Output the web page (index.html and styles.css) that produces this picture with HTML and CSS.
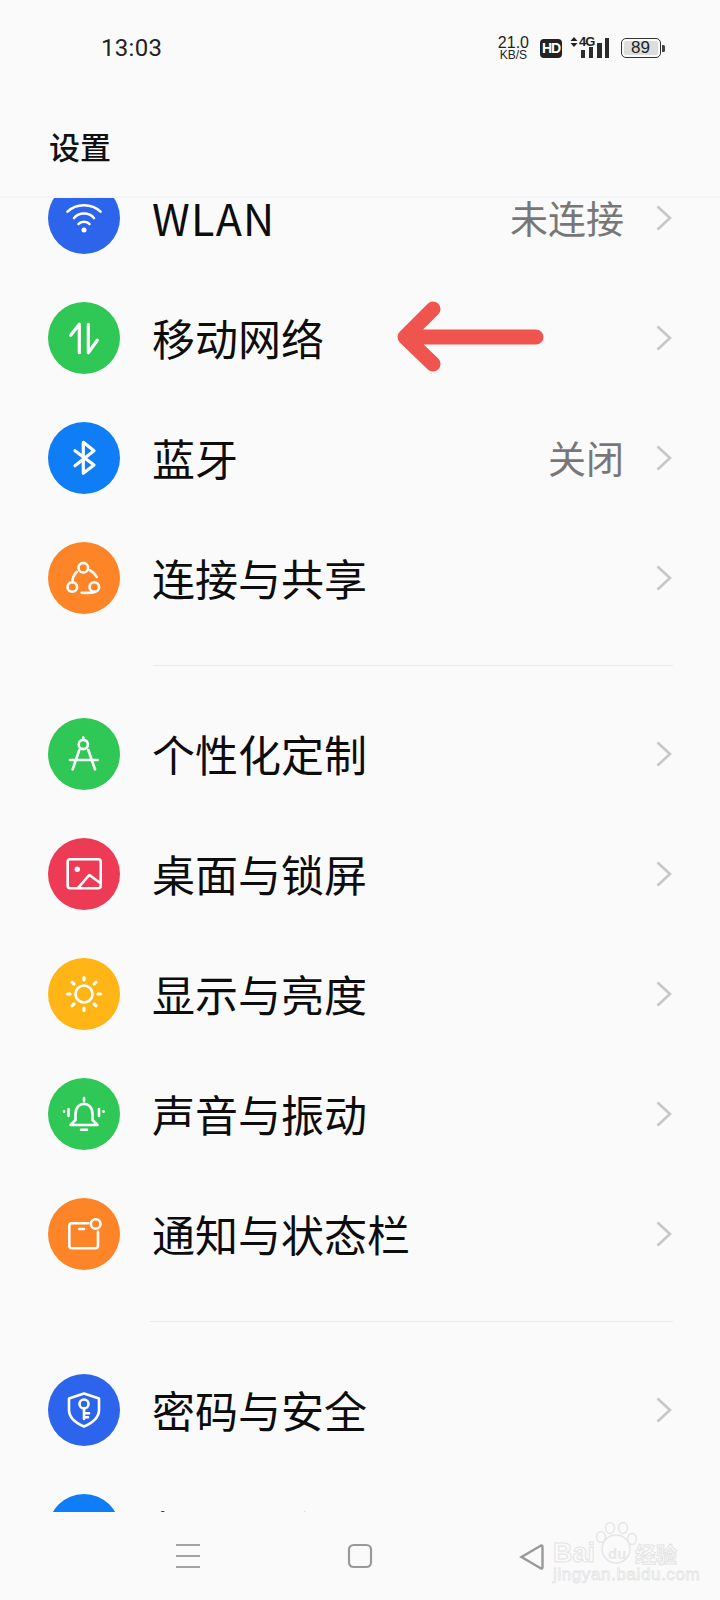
FILE: index.html
```html
<!DOCTYPE html>
<html lang="zh-CN">
<head>
<meta charset="utf-8">
<title>设置</title>
<link rel="stylesheet" href="styles.css">
</head>
<body>
<div class="screen">
  <header class="status">
    <span class="time">13:03</span>
    <div class="status-right">
      <div class="speed"><span class="speed-num">21.0</span><span class="speed-unit">KB/S</span></div>
      <span class="hd">HD</span>
      <div class="signal">
        <svg class="updown" viewBox="0 0 8 12" width="8" height="12"><path d="M4 1 7.500 5H.5zM4 11 .5 7H7.500z" fill="#222"/></svg>
        <span class="net">4G</span>
        <svg class="bars" viewBox="0 0 28 24" width="28" height="24"><path d="M0 14h4v8H0zM8 11h4v11H8zM16 7h5v15h-5zM24 2h4v20h-4z" fill="#2b2b2b"/></svg>
      </div>
      <div class="battery"><div class="battery-body"><span class="battery-fill">89</span></div><span class="battery-cap"></span></div>
    </div>
  </header>
  <div class="title-bar"><h1 class="title">设置</h1></div>
  <main class="viewport">
    <div class="list">
      <section class="group">
        <div class="row"><span class="icon c-blue"><svg viewBox="0 0 40 40"><path d="M3.500 13.700C12 5 28 5 36.500 13.700M10 20C15 14 25 14 30 20M14.500 26C17 23 23 23 25.500 26" class="ln"/><circle cx="20" cy="32" r="2.500" fill="#fff"/></svg></span><span class="label latin">WLAN</span><span class="value">未连接</span><svg class="chev" viewBox="0 0 16 26"><path d="M1.500 1.500 14 13 1.500 24.500"/></svg></div>
        <div class="row"><span class="icon c-green"><svg viewBox="0 0 40 40"><path d="M6.700 17.300 15.300 6.300V34.700M33.300 22.300 24.300 34.700V6.300" class="ln ln-b"/></svg></span><span class="label">移动网络</span><svg class="chev" viewBox="0 0 16 26"><path d="M1.500 1.500 14 13 1.500 24.500"/></svg></div>
        <div class="row"><span class="icon c-sky"><svg viewBox="0 0 40 40"><path d="M11 12.700 30 27 19.300 35.300V4.300L30 12.700 11 27.700" class="ln ln-b"/></svg></span><span class="label">蓝牙</span><span class="value">关闭</span><svg class="chev" viewBox="0 0 16 26"><path d="M1.500 1.500 14 13 1.500 24.500"/></svg></div>
        <div class="row"><span class="icon c-orange"><svg viewBox="0 0 40 40"><circle cx="19.300" cy="9.700" r="4.800" class="ln"/><circle cx="8.300" cy="29" r="4.800" class="ln"/><circle cx="30.300" cy="29" r="4.800" class="ln"/><path d="M26 12.300C29 14 31.500 16.500 32.700 19M8.300 24C8.500 20 10 16.500 12.700 14M17.700 34.700C22 35 27.500 35.200 31 34" class="ln"/></svg></span><span class="label">连接与共享</span><svg class="chev" viewBox="0 0 16 26"><path d="M1.500 1.500 14 13 1.500 24.500"/></svg></div>
      </section>
      <hr class="divider">
      <section class="group">
        <div class="row"><span class="icon c-green"><svg viewBox="0 0 40 40"><circle cx="19.300" cy="10.500" r="4.600" class="ln"/><path d="M19.300 3.500V5.500M15.300 16 8.700 35.300M24.300 16 31 35.300M6 26H33.700" class="ln"/></svg></span><span class="label">个性化定制</span><svg class="chev" viewBox="0 0 16 26"><path d="M1.500 1.500 14 13 1.500 24.500"/></svg></div>
        <div class="row"><span class="icon c-red"><svg viewBox="0 0 40 40"><rect x="3.700" y="5.300" width="33" height="29" rx="2.500" class="ln"/><circle cx="13.300" cy="15.300" r="2.700" fill="#fff"/><path d="M14.300 33.700 25.300 21 36.700 29.300" class="ln"/></svg></span><span class="label">桌面与锁屏</span><svg class="chev" viewBox="0 0 16 26"><path d="M1.500 1.500 14 13 1.500 24.500"/></svg></div>
        <div class="row"><span class="icon c-yellow"><svg viewBox="0 0 40 40"><circle cx="20" cy="20" r="8.500" class="ln"/><path d="M20 3.500V6M20 34V36.500M3.500 20H6M34 20H36.500M8 8.300 10 10M30 30 32 31.700M32 8.300 30 10M10 30 8 31.700" class="ln ln-b"/></svg></span><span class="label">显示与亮度</span><svg class="chev" viewBox="0 0 16 26"><path d="M1.500 1.500 14 13 1.500 24.500"/></svg></div>
        <div class="row"><span class="icon c-green"><svg viewBox="0 0 40 40"><path d="M11.500 20C11.500 6.500 28.500 6.500 28.500 20V26L33.500 31H6.500L11.500 26ZM20 4V7M17 35.700H23M0 17.300V17.800M4.500 15V22M35 15V22M39.500 17.300V17.800" class="ln"/></svg></span><span class="label">声音与振动</span><svg class="chev" viewBox="0 0 16 26"><path d="M1.500 1.500 14 13 1.500 24.500"/></svg></div>
        <div class="row"><span class="icon c-orange"><svg viewBox="0 0 40 40"><path d="M24.300 9.300H8Q5.300 9.300 5.300 12V31.500Q5.300 34.300 8 34.300H31.300Q34 34.300 34 31.500V17.700M15.300 15H20" class="ln"/><circle cx="31.700" cy="10" r="4.800" class="ln"/></svg></span><span class="label">通知与状态栏</span><svg class="chev" viewBox="0 0 16 26"><path d="M1.500 1.500 14 13 1.500 24.500"/></svg></div>
      </section>
      <hr class="divider divider-alt">
      <section class="group">
        <div class="row"><span class="icon c-blue"><svg viewBox="0 0 40 40"><path d="M20 3.500 35 8.500V20C35 28 27 33.500 20 36.500 13 33.500 5 28 5 20V8.500Z" class="ln"/><circle cx="20" cy="14" r="4.500" class="ln"/><path d="M20 18.300V29M20 23.300H25M20 27.300H24" class="ln"/></svg></span><span class="label">密码与安全</span><svg class="chev" viewBox="0 0 16 26"><path d="M1.500 1.500 14 13 1.500 24.500"/></svg></div>
        <div class="row"><span class="icon c-sky"></span><span class="label">权限与隐私</span></div>
      </section>
    </div>
  </main>
  <nav class="navbar">
    <svg class="nav-menu" viewBox="0 0 26 26"><path d="M1 2H25M1 13H25M1 24H25"/></svg>
    <svg class="nav-home" viewBox="0 0 26 26"><rect x="2" y="2" width="22" height="22" rx="4.500"/></svg>
    <svg class="nav-back" viewBox="0 0 26 26"><path d="M2.500 13 22 1.500Q23.500 1 23.500 3V23Q23.500 25 22 24.500Z"/></svg>
  </nav>
  <svg class="arrow" viewBox="0 0 148 72"><path d="M9 36H140M37 8 9 36 37 63"/></svg>
  <div class="watermark">
    <svg class="paw" viewBox="0 0 44 42"><ellipse cx="6" cy="15" rx="4.500" ry="5.500"/><ellipse cx="15" cy="6" rx="4.500" ry="5.500"/><ellipse cx="28" cy="6" rx="4.500" ry="5.500"/><ellipse cx="37" cy="17" rx="4.500" ry="5.500"/><circle cx="21" cy="27" r="14"/></svg>
    <div class="wm-line"><span class="wm-bai">Bai</span><span class="wm-du">du</span><span class="wm-cn">经验</span></div>
    <div class="wm-url">jingyan.baidu.com</div>
  </div>
</div>
</body>
</html>
```
FILE: styles.css
```css
* { box-sizing: border-box; }
html, body { margin: 0; padding: 0; }
body {
  background: #fafafa;
  font-family: "Noto Sans CJK SC", "Noto Sans", sans-serif;
  color: #111;
}
.screen {
  position: relative;
  width: 720px;
  height: 1600px;
  overflow: hidden;
  background: #fafafa;
  display: flex;
  flex-direction: column;
}
.status {
  height: 96px;
  flex: none;
  display: flex;
  justify-content: space-between;
  align-items: center;
  padding: 0 55px 0 101px;
}
.time { font: 400 24px/1 "Roboto", sans-serif; color: #222; letter-spacing: .3px; }
.status-right { display: flex; align-items: center; }
.speed { display: flex; flex-direction: column; align-items: center; font-family: "Liberation Sans", sans-serif; color: #222; margin-right: 11px; }
.speed-num { font-size: 16px; line-height: 15px; }
.speed-unit { font-size: 12px; line-height: 11px; }
.hd {
  width: 22px; height: 19px; border-radius: 4px; background: #222; color: #fff; margin-right: 8px;
  font: 700 14px/19px "Liberation Sans", sans-serif; letter-spacing: -1px; text-align: center;
}
.signal { position: relative; width: 39px; height: 24px; margin-right: 12px; }
.updown { position: absolute; left: 0; top: 0; }
.net { position: absolute; left: 9px; top: 0; font: 700 13px/12px "Liberation Sans", sans-serif; letter-spacing: -1px; color: #222; }
.bars { position: absolute; left: 11px; top: 0; }
.battery { display: flex; align-items: center; gap: 1px; }
.battery-body {
  width: 40px; height: 20px; border: 1.500px solid #333; border-radius: 5px; padding: 1.500px;
}
.battery-fill {
  display: block; width: 34px; height: 14px; background: #ddd; border-radius: 2px; color: #222;
  font: 400 17px/14px "Liberation Sans", sans-serif; text-align: center;
}
.battery-cap { width: 3px; height: 7px; background: #444; border-radius: 0 1.500px 1.500px 0; }
.title-bar {
  height: 102px; flex: none;
  display: flex; align-items: flex-start;
  padding: 28px 0 0 49px;
  border-bottom: 2px solid #f4f5f9;
}
.title { margin: 0; font-size: 31px; line-height: 44px; font-weight: 500; color: #111; }
.viewport { height: 1314px; flex: none; overflow: hidden; }
.list { margin-top: -40px; }
.group { display: flex; flex-direction: column; }
.row {
  height: 120px;
  display: flex;
  align-items: center;
  padding: 0 48px;
}
.icon {
  flex: none;
  width: 72px; height: 72px; border-radius: 50%;
  display: flex; align-items: center; justify-content: center;
  margin-right: 32px;
}
.icon svg { width: 40px; height: 40px; overflow: visible; }
.ln { fill: none; stroke: #fff; stroke-width: 2.600; stroke-linecap: round; stroke-linejoin: round; }
.ln-b { stroke-width: 3.200; }
.c-blue { background: #2c64ec; }
.c-green { background: #2fc755; }
.c-sky { background: #0f7df5; }
.c-orange { background: #fd8527; }
.c-red { background: #ee3b55; }
.c-yellow { background: #ffb515; }
.label { font-size: 43px; line-height: 40px; padding-bottom: 3px; color: #0d0d0d; flex: 1; white-space: nowrap; }
.latin { letter-spacing: 1.200px; }
.value { font-size: 38px; line-height: 40px; padding-bottom: 3px; color: #777; margin-right: 32px; }
.chev { width: 16px; height: 26px; flex: none; fill: none; stroke: #c6c6c6; stroke-width: 2.500; }
.divider { margin: 27px 47px 28px 153px; border: 0; height: 1px; background: #eaeaea; }
.divider-alt { margin-left: 150px; }
.navbar { flex: 1; position: relative; }
.nav-menu, .nav-home, .nav-back { position: absolute; top: 31px; width: 26px; height: 26px; fill: none; stroke: #a3a3a3; stroke-width: 2.200; }
.nav-menu { left: 175px; }
.nav-home { left: 347px; stroke: #999; }
.nav-back { left: 519px; top: 32px; stroke: #999; stroke-width: 2.400; }
.arrow {
  position: absolute; left: 396px; top: 301px; width: 148px; height: 72px;
  fill: none; stroke: #f0544f; stroke-width: 15; stroke-linecap: round; stroke-linejoin: round;
}
.watermark { position: absolute; left: 552px; top: 1521px; width: 136px; height: 64px; color: #fafafa; }
.paw { position: absolute; left: 43px; top: 1px; width: 44px; height: 42px; fill: #fafafa; stroke: #e6e6e6; stroke-width: 1.500; }
.wm-line { position: absolute; left: 1px; top: 18px; display: flex; align-items: center; font-family: "Liberation Sans", sans-serif; white-space: nowrap; }
.wm-bai { font-size: 27px; line-height: 28px; width: 48px; font-weight: 700; -webkit-text-stroke: 1px #e4e4e4; }
.wm-du { font-size: 15px; font-weight: 700; color: #e8e8e8; width: 34px; padding-left: 7px; position: relative; }
.wm-cn { font: 700 21px/28px "Noto Sans CJK SC", sans-serif; -webkit-text-stroke: 1px #e4e4e4; }
.wm-url { position: absolute; left: 1px; top: 45px; font: 400 17px/18px "Liberation Sans", sans-serif; letter-spacing: .6px; white-space: nowrap; color: #fafafa; -webkit-text-stroke: .8px #e4e4e4; }
```
